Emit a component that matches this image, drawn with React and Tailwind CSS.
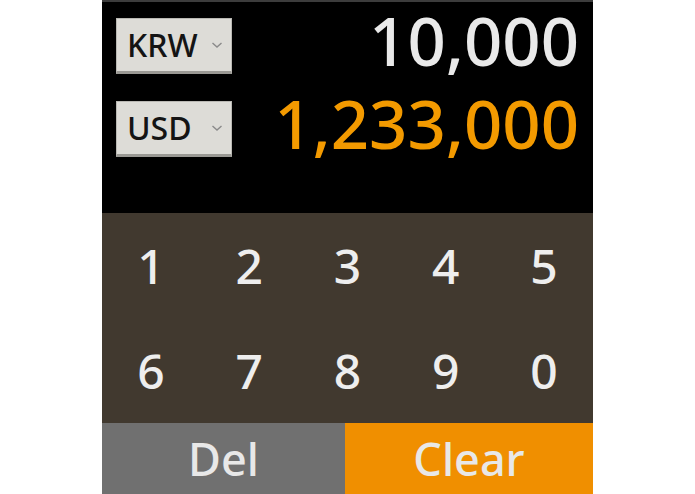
export default function App() {
  const keys = ['1', '2', '3', '4', '5', '6', '7', '8', '9', '0'];
  return (
    <div className="min-h-screen bg-white" style={{ fontFamily: '"Noto Sans", "Open Sans", sans-serif' }}>
      <div className="mx-auto w-[491px] h-[494px] flex flex-col">
        <div className="h-[213px] bg-black border-t-2 border-[#3c3c3c] px-[14px] pt-[16px] flex flex-col gap-[27px]">
          <Row code="KRW" value="10,000" color="text-[#e9e9e9]" />
          <Row code="USD" value="1,233,000" color="text-[#f39a00]" />
        </div>
        <div className="h-[210px] bg-[#41392f] grid grid-cols-5 grid-rows-2">
          {keys.map((k) => (
            <div key={k} className="flex items-center justify-center text-[48px] leading-none font-medium text-[#eeeeee]">
              {k}
            </div>
          ))}
        </div>
        <div className="flex-1 flex text-[45px] leading-none font-medium text-[#e8e8e8]">
          <div className="w-[243px] bg-[#707070] flex items-center justify-center">Del</div>
          <div className="flex-1 bg-[#f08f00] flex items-center justify-center">Clear</div>
        </div>
      </div>
    </div>
  );
}

function Row({ code, value, color }) {
  return (
    <div className="h-[56px] flex items-start justify-between">
      <div className="w-[116px] h-[56px] bg-[#dddcd7] border border-[#b9b8b3] border-b-[3px] border-b-[#9a9994] flex items-center pl-[10px] pr-[8px]">
        <span className="text-[32px] leading-none font-medium text-[#141414]">{code}</span>
        <svg className="ml-auto" width="12" height="8" viewBox="0 0 12 8">
          <path d="M1.5 2 L6 6 L10.5 2" fill="none" stroke="#8a8a8a" strokeWidth="1.4" />
        </svg>
      </div>
      <span className={`text-[67px] leading-[56px] font-medium -mt-[6px] ${color}`}>{value}</span>
    </div>
  );
}
